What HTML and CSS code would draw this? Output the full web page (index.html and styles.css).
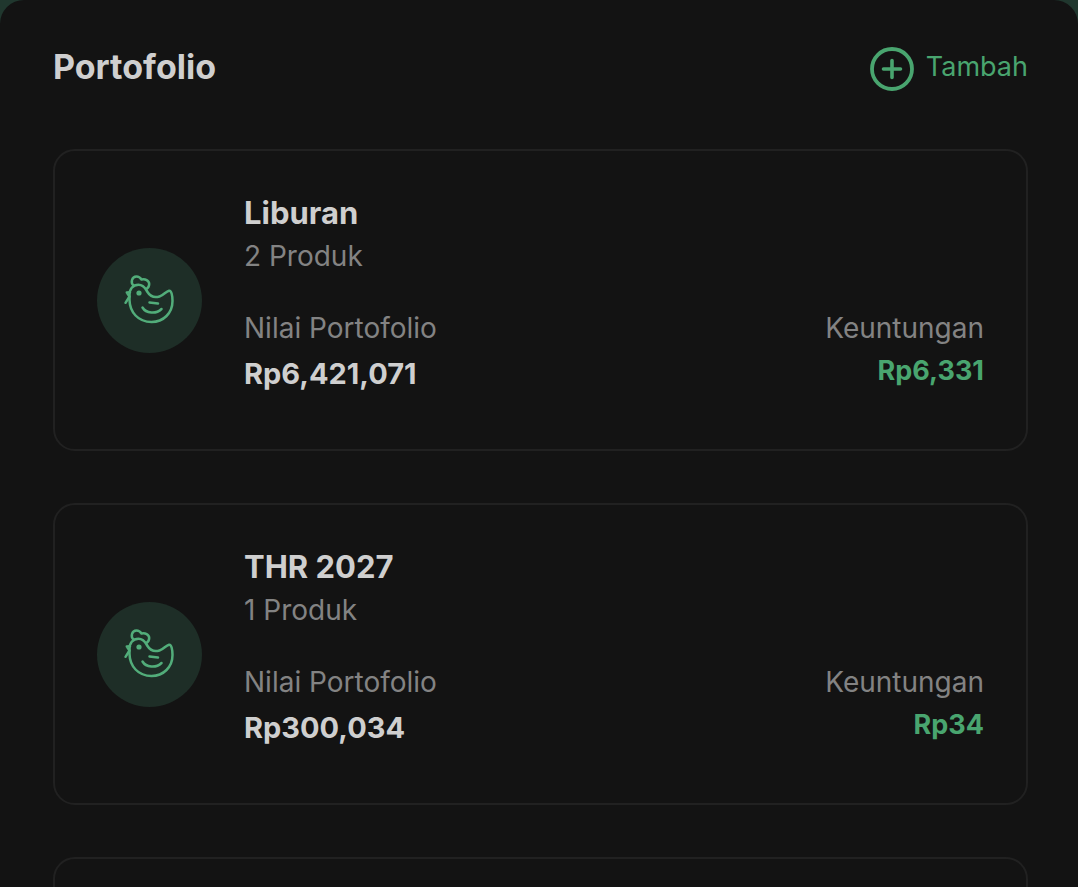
FILE: index.html
```html
<!DOCTYPE html>
<html lang="id">
<head>
<meta charset="utf-8">
<meta name="viewport" content="width=device-width, initial-scale=1">
<title>Portofolio</title>
<link rel="stylesheet" href="styles.css">
</head>
<body>
<svg class="defs" aria-hidden="true">
  <symbol id="hen" viewBox="0 0 60 60">
    <g fill="none" stroke="currentColor" stroke-width="2.5" stroke-linecap="round" stroke-linejoin="round">
      <path d="M9.500 26C9 19 13 14.800 18.500 14.800C24 14.800 25.500 19 27.500 22C30 26 34.500 28 39.500 26.500C43.500 25.300 46 21.300 49 20.700C51.500 20.200 52.500 26 52.500 31C52.500 43 43.500 52 31.500 52C18 52 9.800 42 9.500 30Z"/>
      <path d="M13.500 15.500C10.500 13 11.500 6.500 16.500 6.500C19.500 6.500 20.500 8 21.500 9.500C25 8.500 29.200 10.500 29.200 14C29.200 16.500 28 18 26.500 19"/>
      <path d="M10 22.300L6.800 22.500M6.800 22.500L9.500 26.500L5.500 32.800"/>
      <path d="M29.500 32.500L38 33.500"/>
      <path d="M22.500 37.500C26 43.500 36 44.500 41.500 39"/>
    </g>
    <circle cx="19" cy="23" r="2.600" fill="currentColor"/>
  </symbol>
</svg>
<main class="sheet">
  <header class="head">
    <h1 class="title">Portofolio</h1>
    <button class="add" type="button">
      <svg class="add-icon" viewBox="0 0 44 44" fill="none" stroke="currentColor" stroke-linecap="round" aria-hidden="true">
        <circle cx="22" cy="22" r="20" stroke-width="3.800"/>
        <path d="M22 13.500V30.500M13.500 22H30.500" stroke-width="3.600"/>
      </svg>
      <span>Tambah</span>
    </button>
  </header>
  <section class="list">
    <article class="card">
      <div class="avatar"><svg class="hen"><use href="#hen"/></svg></div>
      <div class="body">
        <h2 class="name">Liburan</h2>
        <p class="label">2 Produk</p>
        <div class="stats">
          <div>
            <p class="label">Nilai Portofolio</p>
            <p class="value">Rp6,421,071</p>
          </div>
          <div class="profit">
            <p class="label">Keuntungan</p>
            <p class="gain">Rp6,331</p>
          </div>
        </div>
      </div>
    </article>
    <article class="card">
      <div class="avatar"><svg class="hen"><use href="#hen"/></svg></div>
      <div class="body">
        <h2 class="name">THR 2027</h2>
        <p class="label">1 Produk</p>
        <div class="stats">
          <div>
            <p class="label">Nilai Portofolio</p>
            <p class="value">Rp300,034</p>
          </div>
          <div class="profit">
            <p class="label">Keuntungan</p>
            <p class="gain">Rp34</p>
          </div>
        </div>
      </div>
    </article>
    <article class="card"></article>
  </section>
</main>
</body>
</html>
```
FILE: styles.css
```css
* {
  box-sizing: border-box;
}

body {
  margin: 0;
  background: #20372e;
  color: #cfcfcf;
  font-family: Inter, "Liberation Sans", sans-serif;
}

h1,
h2,
p {
  margin: 0;
}

.defs {
  display: none;
}

.sheet {
  height: 100vh;
  overflow: hidden;
  padding: 43px 50px 0 53px;
  border-radius: 24px 24px 0 0;
  background: #131313;
}

.head {
  display: flex;
  align-items: center;
  justify-content: space-between;
  margin-bottom: 58px;
}

.title {
  font-size: 34px;
  line-height: 48px;
  font-weight: 700;
}

.add {
  display: flex;
  align-items: center;
  gap: 12px;
  padding: 0;
  border: 0;
  background: none;
  color: #49a56f;
  font: 400 27px/48px Inter, "Liberation Sans", sans-serif;
  cursor: pointer;
}

.add-icon {
  width: 44px;
  height: 44px;
  margin-top: 4px;
}

.list {
  display: grid;
  gap: 52px;
}

.card {
  display: flex;
  align-items: center;
  gap: 42px;
  min-height: 302px;
  padding: 40px 42px;
  border: 2px solid #212121;
  border-radius: 22px;
}

.avatar {
  display: grid;
  place-items: center;
  flex: none;
  width: 105px;
  height: 105px;
  border-radius: 50%;
  background: #1e2e27;
  color: #52ad7a;
}

.hen {
  width: 60px;
  height: 60px;
}

.body {
  flex: 1;
  padding-bottom: 10px;
}

.name {
  font-size: 31px;
  line-height: 42px;
  font-weight: 700;
}

.label {
  color: #838383;
  font-size: 28px;
  line-height: 44px;
}

.stats {
  display: flex;
  justify-content: space-between;
  margin-top: 28px;
}

.value {
  font-size: 29px;
  line-height: 48px;
  font-weight: 700;
}

.profit {
  text-align: right;
}

.gain {
  color: #49a56f;
  font-size: 27px;
  line-height: 42px;
  font-weight: 700;
}
```
